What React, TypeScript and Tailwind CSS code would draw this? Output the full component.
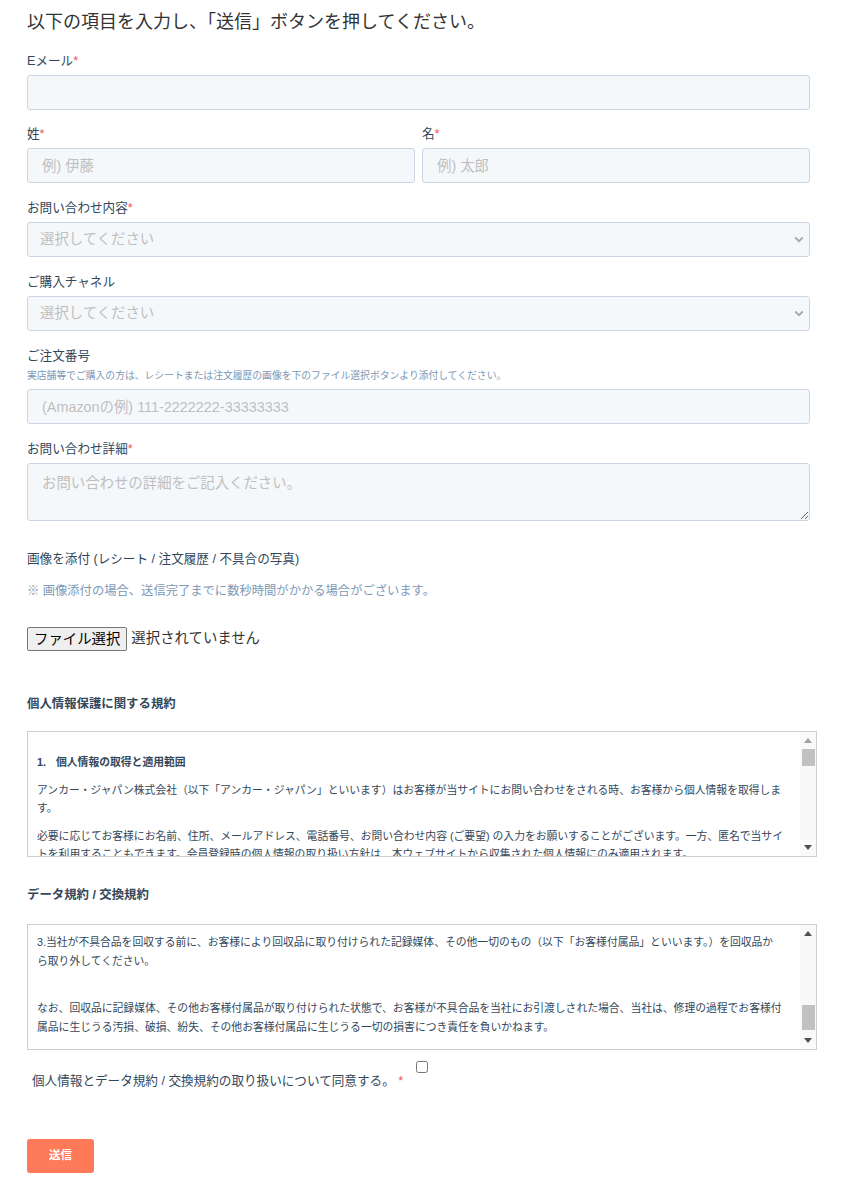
import React from "react";

function Req() {
  return <span className="text-[#f2545b]">*</span>;
}

function FieldLabel({ text, required }: { text: string; required?: boolean }) {
  return (
    <div className="text-[12.6px] leading-[16px] text-[#33475b]">
      {text}
      {required && <Req />}
    </div>
  );
}

function TextInput({ placeholder, width }: { placeholder?: string; width: string }) {
  return (
    <input
      type="text"
      placeholder={placeholder}
      className={`mt-[6px] block h-[35px] ${width} rounded-[3px] border border-[#cbd6e2] bg-[#f5f8fa] px-[14px] text-[14.4px] text-[#33475b] outline-none placeholder:text-[#bfbfbf]`}
    />
  );
}

function FakeSelect() {
  return (
    <div className="mt-[6px] flex h-[35px] w-[783px] items-center justify-between rounded-[3px] border border-[#cbd6e2] bg-[#f5f8fa] pl-[12px] pr-[5px] text-[14.4px] text-[#bfbfbf]">
      <span>選択してください</span>
      <svg width="10" height="7" viewBox="0 0 10 7" aria-hidden>
        <path d="M1.2 1.5 5 5.2 8.8 1.5" fill="none" stroke="#a8a8a8" strokeWidth="1.8" />
      </svg>
    </div>
  );
}

function ScrollArrow({ up, active }: { up?: boolean; active?: boolean }) {
  const fill = active ? "#505050" : "#a3a3a3";
  return (
    <div className="flex h-[17px] items-center justify-center">
      <svg width="8" height="5" viewBox="0 0 8 5" aria-hidden>
        {up ? <path d="M0 5 4 0 8 5Z" fill={fill} /> : <path d="M0 0 4 5 8 0Z" fill={fill} />}
      </svg>
    </div>
  );
}

function FakeScrollbar({ thumb, upActive }: { thumb: string; upActive?: boolean }) {
  return (
    <div className="flex w-[16px] shrink-0 flex-col bg-[#f9f9f9]">
      <ScrollArrow up active={upActive} />
      <div className="flex-1">
        <div className={`mx-auto w-[13px] bg-[#c1c1c1] ${thumb}`} />
      </div>
      <ScrollArrow active />
    </div>
  );
}

export default function App() {
  return (
    <div className="min-h-[1181px] w-[855px] bg-white pl-[27px] pt-[10px] font-['Liberation_Sans','Noto_Sans_CJK_JP',sans-serif] text-[#33475b]">
      <h1 className="text-[18px] font-normal leading-[24px] text-[#333333]">
        以下の項目を入力し、「送信」ボタンを押してください。
      </h1>

      {/* email */}
      <div className="mt-[19px]">
        <FieldLabel text="Eメール" required />
        <TextInput width="w-[783px]" />
      </div>

      {/* name */}
      <div className="mt-[16px] flex w-[783px] gap-[7px]">
        <div className="w-[388px]">
          <FieldLabel text="姓" required />
          <TextInput width="w-[388px]" placeholder="例) 伊藤" />
        </div>
        <div className="w-[388px]">
          <FieldLabel text="名" required />
          <TextInput width="w-[388px]" placeholder="例) 太郎" />
        </div>
      </div>

      <div className="mt-[17px]">
        <FieldLabel text="お問い合わせ内容" required />
        <FakeSelect />
      </div>

      <div className="mt-[17px]">
        <FieldLabel text="ご購入チャネル" />
        <FakeSelect />
      </div>

      <div className="mt-[17px]">
        <FieldLabel text="ご注文番号" />
        <div className="mt-[5px] text-[9.8px] leading-[14px] text-[#7c98b6]">
          実店舗等でご購入の方は、レシートまたは注文履歴の画像を下のファイル選択ボタンより添付してください。
        </div>
        <TextInput width="w-[783px]" placeholder="(Amazonの例) 111-2222222-33333333" />
      </div>

      <div className="mt-[17px]">
        <FieldLabel text="お問い合わせ詳細" required />
        <textarea
          placeholder="お問い合わせの詳細をご記入ください。"
          className="mt-[6px] block h-[58px] w-[783px] rounded-[3px] border border-[#cbd6e2] bg-[#f5f8fa] px-[14px] pt-[9px] text-[14.4px] leading-[20px] text-[#33475b] outline-none placeholder:text-[#bfbfbf]"
        />
      </div>

      {/* attachments */}
      <div className="mt-[30px] text-[12.6px] leading-[16px] text-[#33475b]">
        画像を添付 (レシート / 注文履歴 / 不具合の写真)
      </div>
      <div className="mt-[16px] text-[12.3px] leading-[16px] text-[#7c98b6]">
        ※ 画像添付の場合、送信完了までに数秒時間がかかる場合がございます。
      </div>
      <div className="mt-[28px] flex h-[24px] items-center gap-[4px] text-[14.4px] text-[#222]">
        <button
          type="button"
          className="h-[24px] rounded-[2px] border border-[#767676] bg-[#efefef] px-[6px] leading-[22px] text-black"
        >
          ファイル選択
        </button>
        <span className="text-[#333]">選択されていません</span>
      </div>

      {/* privacy terms */}
      <div className="mt-[45px] text-[12.4px] font-bold leading-[16px] text-[#33475b]">
        個人情報保護に関する規約
      </div>
      <div className="mt-[19px] flex h-[126px] w-[790px] border border-[#cfcfcf] bg-white">
        <div className="flex-1 overflow-hidden whitespace-nowrap pl-[9px] pt-[22px] text-[10.8px] text-[#33475b]">
          <div className="font-bold leading-[17px]">
            1.<span className="ml-[10px]">個人情報の取得と適用範囲</span>
          </div>
          <p className="mt-[10px] leading-[18px]">
            アンカー・ジャパン株式会社（以下「アンカー・ジャパン」といいます）はお客様が当サイトにお問い合わせをされる時、お客様から個人情報を取得しま
            <br />
            す。
          </p>
          <p className="mt-[10px] leading-[18px]">
            必要に応じてお客様にお名前、住所、メールアドレス、電話番号、お問い合わせ内容 (ご要望) の入力をお願いすることがございます。一方、匿名で当サイ
            <br />
            トを利用することもできます。会員登録時の個人情報の取り扱い方針は、本ウェブサイトから収集された個人情報にのみ適用されます。
          </p>
        </div>
        <FakeScrollbar thumb="mt-0 h-[17px]" />
      </div>

      {/* data / exchange terms */}
      <div className="mt-[30px] text-[12.4px] font-bold leading-[16px] text-[#33475b]">
        データ規約 / 交換規約
      </div>
      <div className="mt-[21px] flex h-[126px] w-[790px] border border-[#cfcfcf] bg-white">
        <div className="flex-1 overflow-hidden whitespace-nowrap pl-[9px] pt-[8px] text-[10.8px] leading-[19px] text-[#33475b]">
          <p>
            3.当社が不具合品を回収する前に、お客様により回収品に取り付けられた記録媒体、その他一切のもの（以下「お客様付属品」といいます。）を回収品か
            <br />
            ら取り外してください。
          </p>
          <p className="mt-[28px]">
            なお、回収品に記録媒体、その他お客様付属品が取り付けられた状態で、お客様が不具合品を当社にお引渡しされた場合、当社は、修理の過程でお客様付
            <br />
            属品に生じうる汚損、破損、紛失、その他お客様付属品に生じうる一切の損害につき責任を負いかねます。
          </p>
        </div>
        <FakeScrollbar thumb="mt-[63px] h-[25px]" upActive />
      </div>

      {/* consent */}
      <div className="mt-[11px] flex h-[12px] w-[790px] justify-center">
        <input type="checkbox" className="h-[12px] w-[12px]" />
      </div>
      <div className="pl-[5px] text-[12.6px] leading-[16px] text-[#33475b]">
        個人情報とデータ規約 / 交換規約の取り扱いについて同意する。 <Req />
      </div>

      <button
        type="button"
        className="mt-[50px] block h-[34px] w-[67px] rounded-[3px] bg-[#ff7a59] text-[11.5px] font-bold text-white"
      >
        送信
      </button>
    </div>
  );
}
